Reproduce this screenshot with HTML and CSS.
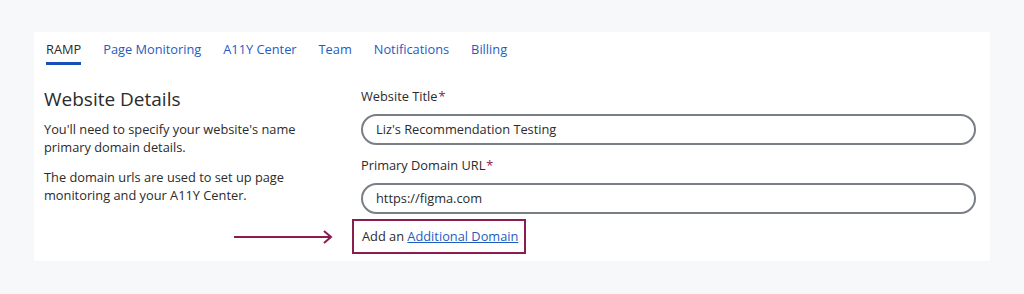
FILE: index.html
```html
<!DOCTYPE html>
<html lang="en">
<head>
    <meta charset="UTF-8">
    <meta name="viewport" content="width=device-width, initial-scale=1.0">
    <title>Website Details</title>
    <link rel="stylesheet" href="styles.css">
</head>
<body>
<div class="card">
    <nav class="tabs">
        <a class="tab active">RAMP</a>
        <a class="tab">Page Monitoring</a>
        <a class="tab">A11Y Center</a>
        <a class="tab">Team</a>
        <a class="tab">Notifications</a>
        <a class="tab">Billing</a>
    </nav>

    <div class="content">
        <div class="intro">
            <h1>Website Details</h1>
            <p>You'll need to specify your website's name primary domain details.</p>
            <p>The domain urls are used to set up page monitoring and your A11Y Center.</p>
        </div>

        <div class="form">
            <label>Website Title<span class="req">*</span></label>
            <div class="field">Liz's Recommendation Testing</div>
            <label>Primary Domain URL<span class="req">*</span></label>
            <div class="field">https://figma.com</div>

            <div class="add-row">
                <svg class="arrow" width="100" height="14" viewBox="0 0 100 14">
                    <line x1="0" y1="7" x2="96" y2="7" stroke="#8b1c4f" stroke-width="2"/>
                    <polyline points="90,1 97,7 90,13" fill="none" stroke="#8b1c4f" stroke-width="2"/>
                </svg>
                <div class="add-box">Add an <a href="#">Additional Domain</a></div>
            </div>
        </div>
    </div>
</div>
</body>
</html>
```

FILE: styles.css
```css
body {
    margin: 0;
    padding: 32px 0 0 34px;
    background-color: #f7f8fa;
    font-family: "Open Sans", Arial, sans-serif;
    color: #2b2b2b;
}
.card {
    background-color: #ffffff;
    width: 956px;
    height: 229px;
    box-sizing: border-box;
    padding: 0 10px;
}
.tabs {
    display: flex;
    gap: 22px;
    padding: 7px 0 0 2px;
}
.tab {
    font-size: 12.8px;
    line-height: 20px;
    color: #1f5cbf;
    padding-bottom: 3px;
    border-bottom: 3px solid transparent;
}
.tab.active {
    color: #2b2b2b;
    border-bottom-color: #1b4fb8;
}
.content {
    display: flex;
    margin-top: 21px;
}
.intro {
    width: 317px;
}
h1 {
    font-size: 19px;
    font-weight: 400;
    line-height: 26px;
    margin: 0 0 8px;
    color: #2b2b2b;
}
p {
    font-size: 12.8px;
    line-height: 18px;
    margin: 0 0 12px;
    width: 270px;
}
.form {
    width: 615px;
    padding-top: 1px;
}
label {
    display: block;
    font-size: 12.8px;
    line-height: 18px;
}
.req {
    color: #8b1c4f;
    margin-left: 1px;
}
.field {
    height: 31px;
    box-sizing: border-box;
    border: 2px solid #7a7e85;
    border-radius: 16px;
    padding: 0 13px;
    font-size: 12.8px;
    line-height: 27px;
    margin: 9px 0 11px;
}
.add-row {
    position: relative;
    margin-top: -6px;
}
.arrow {
    position: absolute;
    left: -127px;
    top: 11px;
}
.add-box {
    display: inline-block;
    margin-left: -9px;
    border: 2px solid #8b1c4f;
    padding: 0 6px 0 8px;
    height: 35px;
    line-height: 31px;
    box-sizing: border-box;
    font-size: 12.8px;
}
.add-box a {
    color: #1f5cbf;
    text-decoration: underline;
}
```
